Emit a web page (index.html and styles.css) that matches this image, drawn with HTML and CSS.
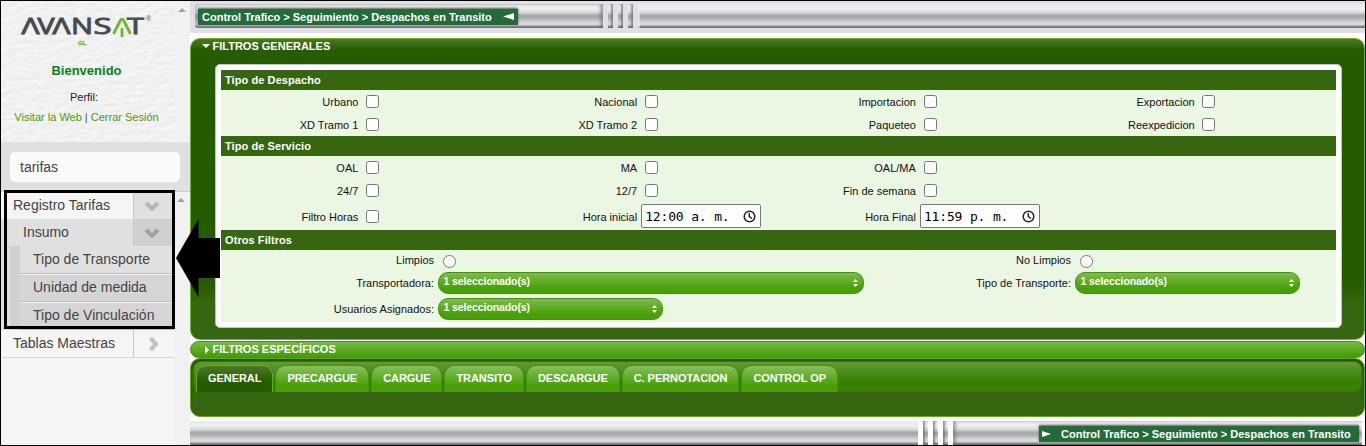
FILE: index.html
```html
<!DOCTYPE html>
<html lang="es">
<head>
<meta charset="utf-8">
<title>Despachos en Transito</title>
<link rel="stylesheet" href="styles.css">
</head>
<body>
<div class="app">
  <aside class="sidebar">
    <div class="profile-wrap">
      <div class="profile">
        <svg class="texture" width="174" height="141" aria-hidden="true">
          <filter id="paper" x="0" y="0" width="100%" height="100%" color-interpolation-filters="sRGB">
            <feTurbulence type="fractalNoise" baseFrequency="0.1 0.22" numOctaves="3" seed="4"/>
            <feDiffuseLighting lighting-color="#fff" surfaceScale="0.16" diffuseConstant="1.114"><feDistantLight azimuth="50" elevation="58"/></feDiffuseLighting>
          </filter>
          <rect width="174" height="141" filter="url(#paper)"/>
        </svg>
        <svg class="logo" width="174" height="50" viewBox="0 0 174 50">
          <g class="logo-word">
            <text x="20.500" y="33" textLength="18" lengthAdjust="spacingAndGlyphs">Λ</text>
            <text x="36.500" y="33" textLength="17" lengthAdjust="spacingAndGlyphs">V</text>
            <text x="51.500" y="33" textLength="18" lengthAdjust="spacingAndGlyphs">Λ</text>
            <text x="70" y="33" textLength="22" lengthAdjust="spacingAndGlyphs">N</text>
            <text x="92.500" y="33" textLength="18" lengthAdjust="spacingAndGlyphs">S</text>
            <text x="126" y="33" textLength="17" lengthAdjust="spacingAndGlyphs">T</text>
          </g>
          <path d="M112.500 33 119.300 19.500Q121 17 122.700 19.500L129.500 33M121 27V36" fill="none" stroke="#71b62c" stroke-width="2.800"/>
          <text class="logo-reg" x="145" y="20">®</text>
          <text class="logo-sub" x="77" y="44">GL</text>
        </svg>
        <div class="welcome">Bienvenido</div>
        <div class="role">Perfil:</div>
        <div class="links"><a>Visitar la Web</a> | <a>Cerrar Sesión</a></div>
      </div>
      <div class="gutter"><i class="scroll-up"></i></div>
    </div>
    <div class="search"><div class="search-box">tarifas</div></div>
    <div class="nav-wrap">
      <nav class="nav">
        <div class="nav-row open"><span>Registro Tarifas</span><b><svg width="16" height="12" viewBox="0 0 16 12"><path d="M2 3 8 8.500 14 3"/></svg></b></div>
        <div class="nav-branch">
          <div class="nav-row sub"><span>Insumo</span><b><svg width="16" height="12" viewBox="0 0 16 12"><path d="M2 3 8 8.500 14 3"/></svg></b></div>
          <div class="nav-leaves">
            <div class="leaf">Tipo de Transporte</div>
            <div class="leaf dark">Unidad de medida</div>
            <div class="leaf dark last">Tipo de Vinculación</div>
          </div>
        </div>
        <div class="nav-row closed"><span>Tablas Maestras</span><b><svg width="12" height="16" viewBox="0 0 12 16"><path d="M2.500 2 8 8 2.500 14"/></svg></b></div>
      </nav>
      <div class="gutter"><i class="scroll-up nav-up"></i></div>
    </div>
  </aside>

  <main class="main">
    <header class="bar top">
      <div class="metal lead"><div class="crumb"><span>Control Trafico &gt; Seguimiento &gt; Despachos en Transito</span><svg width="11" height="7" viewBox="0 0 11 7"><path d="M0 3.500 11 0V7Z" fill="#fff"/></svg></div></div>
      <i class="metal stripe"></i><i class="metal stripe"></i><i class="metal stripe"></i>
      <div class="metal rest"></div>
    </header>

    <section class="filters">
      <h3><i class="tri-down"></i>FILTROS GENERALES</h3>
      <div class="card">
        <h4>Tipo de Despacho</h4>
        <div class="grid8">
          <label>Urbano</label><input type="checkbox"><label>Nacional</label><input type="checkbox"><label>Importacion</label><input type="checkbox"><label>Exportacion</label><input type="checkbox">
          <label>XD Tramo 1</label><input type="checkbox"><label>XD Tramo 2</label><input type="checkbox"><label>Paqueteo</label><input type="checkbox"><label>Reexpedicion</label><input type="checkbox">
        </div>
        <h4>Tipo de Servicio</h4>
        <div class="grid8 service">
          <label>OAL</label><input type="checkbox"><label>MA</label><input type="checkbox"><label>OAL/MA</label><input type="checkbox"><i></i><i></i>
          <label>24/7</label><input type="checkbox"><label>12/7</label><input type="checkbox"><label>Fin de semana</label><input type="checkbox"><i></i><i></i>
          <label>Filtro Horas</label><input type="checkbox"><label>Hora inicial</label>
          <div class="time"><span>12:00 a. m.</span><svg width="13" height="13" viewBox="0 0 13 13"><circle cx="6.500" cy="6.500" r="5.300"/><path d="M6.300 3V6.700L9 8.500"/></svg></div>
          <label>Hora Final</label>
          <div class="time"><span>11:59 p. m.</span><svg width="13" height="13" viewBox="0 0 13 13"><circle cx="6.500" cy="6.500" r="5.300"/><path d="M6.300 3V6.700L9 8.500"/></svg></div>
        </div>
        <h4>Otros Filtros</h4>
        <div class="grid4">
          <label>Limpios</label><input type="radio"><label>No Limpios</label><input type="radio">
          <label>Transportadora:</label><div class="select wide">1 seleccionado(s)<svg width="5" height="8" viewBox="0 0 5 8"><path d="M2.500 0 5 3H0ZM0 5H5L2.500 8Z"/></svg></div>
          <label>Tipo de Transporte:</label><div class="select">1 seleccionado(s)<svg width="5" height="8" viewBox="0 0 5 8"><path d="M2.500 0 5 3H0ZM0 5H5L2.500 8Z"/></svg></div>
          <label>Usuarios Asignados:</label><div class="select">1 seleccionado(s)<svg width="5" height="8" viewBox="0 0 5 8"><path d="M2.500 0 5 3H0ZM0 5H5L2.500 8Z"/></svg></div>
        </div>
      </div>
    </section>

    <section class="specific"><i class="tri-right"></i>FILTROS ESPECÍFICOS</section>

    <section class="tabs">
      <div class="tab-strip">
        <div class="tab active">GENERAL</div><div class="tab">PRECARGUE</div><div class="tab">CARGUE</div><div class="tab">TRANSITO</div><div class="tab">DESCARGUE</div><div class="tab">C. PERNOTACION</div><div class="tab">CONTROL OP</div>
      </div>
    </section>

    <footer class="bar bottom">
      <div class="metal rest"></div>
      <i class="metal stripe"></i><i class="metal stripe"></i><i class="metal stripe"></i>
      <div class="metal tail"><div class="crumb"><svg width="9" height="6" viewBox="0 0 9 6"><path d="M0 0 9 3 0 6Z" fill="#fff"/></svg><span>Control Trafico &gt; Seguimiento &gt; Despachos en Transito</span></div></div>
    </footer>
  </main>

  <div class="highlight"></div>
  <svg class="arrow" width="44" height="78" viewBox="0 0 44 78"><path d="M0 39 22.500 0V19H44V59H22.500V78Z"/></svg>
</div>
</body>
</html>
```
FILE: styles.css
```css
* { box-sizing: border-box; }
body { margin: 0; font-family: "Liberation Sans", Arial, sans-serif; font-size: 12px; color: #222; }
.app { position: relative; display: flex; width: 1366px; height: 446px; border: 1px solid #000; background: #fff; overflow: hidden; }

.sidebar { width: 189px; flex: none; display: flex; flex-direction: column; background: #f1f1f1; }
.profile-wrap { display: flex; height: 141px; }
.profile { position: relative; width: 174px; text-align: center; font-size: 11px; }
.texture { position: absolute; left: 0; top: 0; }
.logo { position: relative; display: block; }
.logo-word { font: 22px "Open Sans", "Noto Sans", sans-serif; fill: #454b50; stroke: #454b50; stroke-width: .9; }
.logo-reg { font-size: 7px; fill: #555; }
.logo-sub { font-size: 6px; font-weight: bold; fill: #71b62c; stroke: #71b62c; stroke-width: .3; }
.welcome { position: relative; height: 27px; line-height: 37px; font-size: 13px; font-weight: bold; color: #078017; padding-right: 3px; margin-top: 1px; }
.role { position: relative; height: 20px; line-height: 37px; padding-right: 8px; }
.links { position: relative; line-height: 37px; color: #555; padding-right: 3px; white-space: nowrap; }
.links a { color: #4a9b0a; }
.gutter { flex: 1; background: #f1f1f1; padding: 7px 0 0 3px; }
.scroll-up { display: block; width: 8px; border: 4px solid transparent; border-top: 0; border-bottom-color: #a3a3a3; }
.search { height: 49px; background: #e0e0e0; padding: 10px 10px 0 9px; }
.search-box { height: 30px; border-radius: 5px; background: #fafafa; padding-left: 10px; font-size: 14px; line-height: 30px; color: #444; }
.nav-wrap { display: flex; flex: 1; border-top: 1px solid #ccc; }
.nav { width: 173px; background: #f5f5f5; font-size: 14px; color: #444; }
.nav-row { display: flex; height: 27px; line-height: 27px; }
.nav-row span { flex: 1; padding-left: 12px; }
.nav-row b { width: 41px; background: #e0e0e0; border-left: 1px solid #c8c8c8; display: flex; align-items: center; justify-content: center; padding-right: 4px; }
.nav-row path { fill: none; stroke: #b4b4b4; stroke-width: 4.200; }
.nav-branch { background: #e0e0e0; padding-left: 9px; }
.nav-row.sub span { padding-left: 13px; }
.nav-row.sub b { background: #d0d0d0; }
.nav-row.sub path { stroke: #a0a0a0; }
.nav-leaves { background: #d0d0d0; padding-left: 10px; }
.leaf { height: 28px; line-height: 26px; padding-left: 13px; background: #e0e0e0; border-bottom: 1px solid #bbb; white-space: nowrap; }
.leaf.dark { background: #d5d5d5; border-top: 1px solid #f4f4f4; line-height: 25px; }
.closed { height: 28px; border-bottom: 1px solid #d6d6d6; }
.nav-row.closed b { background: #f5f5f5; padding-right: 0; }
.nav-row.closed path { stroke: #c4c4c4; }
.nav-up { margin-top: -1px; }

.main { flex: 1; min-width: 0; display: flex; flex-direction: column; }
.bar { display: flex; flex: none; }
.top { height: 32px; background: #dde0e5; padding: 3px 0 5px 5px; margin-bottom: 5px; }
.metal { flex: none; background: linear-gradient(#e9e9ec 0, #f0f0f1 20%, #d5d7d8 36%, #a6aaac 48%, #a9adaf 58%, #d2d4d5 74%, #dcdcdc 85%, #777 96%, #6c6c6c 100%); }
.lead { width: 408px; padding: 5px 0 0 3px; border-radius: 4px 0 0 3px; box-shadow: inset -3px 0 3px #6668, inset 2px 0 2px #8886; }
.crumb { width: 320px; height: 16px; background: #236c39; color: #fff; font-weight: bold; font-size: 11px; line-height: 16px; display: flex; align-items: center; box-shadow: 0 -1px 2px #555; white-space: nowrap; }
.lead .crumb { padding-left: 4px; justify-content: space-between; padding-right: 4px; }
.lead .crumb svg { margin-top: -2px; }
.stripe { width: 5px; margin-left: 5px; box-shadow: inset -2px 0 2px #666a; }
.top .rest { flex: 1; margin-left: 5px; border-left: 2px solid #eeea; }
.bottom { height: 24px; margin-top: 4px; }
.bottom .rest { width: 728px; }
.bottom .stripe { box-shadow: inset 2px 0 2px #666a; }
.tail { width: 409px; margin-left: 5px; padding: 5px 0 0 86px; box-shadow: inset 3px 0 3px #6668; }
.tail .crumb { width: 320px; gap: 10px; padding-left: 3px; }

.filters { flex: none; height: 302px; border: 1px solid #6db12b; border-radius: 10px; background: linear-gradient(#4a7725 0, #255c00 12px, #255c00 245px, #36660f 263px); padding-left: 24px; }
.filters h3 { margin: 0 0 0 -24px; height: 25px; padding: 0 0 0 11px; font-size: 11px; line-height: 14px; color: #fff; display: flex; gap: 2.500px; }
.tri-down { width: 8px; height: 4px; border: 4px solid transparent; border-top-color: #fff; border-bottom: 0; margin-top: 5px; }
.card { width: 1127px; height: 264px; padding: 5px; background: #fff; border: 1px solid #bfc5bb; border-radius: 5px; }
.card h4 { margin: 0; height: 20px; padding-left: 4px; background: #36660f; color: #fff; font-size: 11px; line-height: 20px; letter-spacing: .08px; }
.grid8, .grid4 { display: grid; background: #eaf7e2; color: #111; font-size: 11px; }
.grid8 { grid-template-columns: repeat(8, 1fr); grid-auto-rows: 23px; }
.service { grid-template-rows: 23px 23px 28px; }
.grid4 { grid-template-columns: 215px 422px 215px 263px; grid-template-rows: 20px 26px 26px; }
label { text-align: right; padding-right: 2px; align-self: center; padding-top: 1px; line-height: 14px; white-space: nowrap; }
.grid4 label { padding-top: 0; }
.grid8 input { margin: 0 0 0 5.750px; align-self: center; width: 13px; height: 13px; }
.grid4 input { margin: 5px 0 0 7px; width: 13px; height: 13px; }
.time { width: 120px; height: 24px; margin-left: 2px; align-self: center; display: flex; justify-content: space-between; align-items: center; padding: 0 4px 0 3px; background: #fff; border: 1px solid #777; border-radius: 2px; color: #000; font: 13px "DejaVu Sans Mono", monospace; letter-spacing: -.16px; }
.time span { padding-top: 1px; white-space: pre; }
.time svg { fill: none; stroke: #222; stroke-width: 1.500; }
.select { position: relative; z-index: 1; width: 225px; height: 22px; margin: 2px 0 0 2px; padding: 0 5px 0 4.500px; border: 1px solid #439014; border-radius: 10px; background: linear-gradient(#7ebb4d, #48a006 75%); color: #fff; font-weight: bold; font-size: 10.500px; letter-spacing: -.1px; line-height: 17px; display: flex; justify-content: space-between; }
.wide { width: 426px; }
.select svg { fill: #fff; margin-top: 6px; }

.specific { flex: none; height: 17px; margin-top: 1px; padding-left: 14px; border: 1px solid #439014; border-radius: 9px; background: linear-gradient(#78b84b, #48a006 90%); color: #fff; font-weight: bold; font-size: 11px; line-height: 15px; display: flex; gap: 3.500px; }
.tri-right { width: 4px; height: 8px; border: 4px solid transparent; border-left-color: #fff; border-right: 0; margin-top: 4px; }
.tabs { flex: none; height: 59px; border: 1px solid #62aa22; border-radius: 10px; padding: 2px; background: #36660f; box-shadow: inset 0 3px 3px #235600; }
.tab-strip { height: 31px; border: 1px solid #397704; border-radius: 8px; background: linear-gradient(#609b34, #3a8004 65%); padding: 3px 0 0 2px; display: flex; gap: 2px; }
.tab { height: 27px; padding: 0 11px; border: 1px solid #439014; border-bottom: 0; border-radius: 10px 10px 0 0; background: linear-gradient(#87bf5b, #48a006 75%); color: #fff; font-weight: bold; font-size: 11px; letter-spacing: -.06px; line-height: 25px; white-space: nowrap; }
.tab.active { border-color: #68aa2c; background: linear-gradient(#4b7928, #255c00 60%); }

/* Callout drawn over the menu */
.highlight { position: absolute; left: 3px; top: 189px; width: 171px; height: 139px; border: 3px solid #000; }
.arrow { position: absolute; left: 175px; top: 218px; }
```
